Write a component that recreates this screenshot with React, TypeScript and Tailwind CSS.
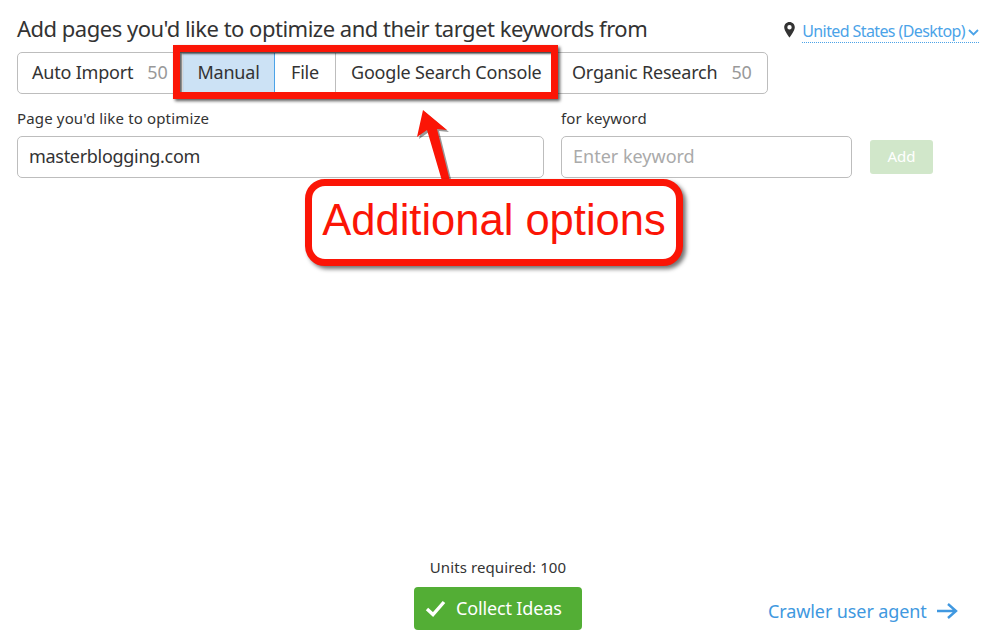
import React from 'react';

const tabClass = 'flex h-full items-center pb-[2px] text-[18px] tracking-[-0.2px] text-[#333]';

export default function App() {
  return (
    <main className="relative flex h-[635px] w-[1000px] flex-col overflow-hidden bg-white pl-[17px] font-['Noto_Sans',sans-serif] text-[#333]">
      {/* Title row */}
      <header className="flex h-[52px] items-start">
        <h1 className="mt-[12px] text-[22px] leading-[32px] tracking-[-0.5px] text-[#333] whitespace-nowrap">
          Add pages you'd like to optimize and their target keywords from
        </h1>
        <div className="ml-[137px] mt-[20px] flex items-center">
          <svg width="11" height="16" viewBox="0 0 11 16" className="mr-[7px] -mt-[3px]">
            <path fillRule="evenodd" fill="#333" d="M5.5 0C2.5 0 .2 2.3.2 5.3c0 3.6 5.3 10.4 5.3 10.4s5.3-6.800 5.3-10.400C10.800 2.300 8.500 0 5.500 0zm0 7.400a2.200 2.200 0 1 1 0-4.400 2.200 2.200 0 0 1 0 4.400z" />
          </svg>
          <a className="flex h-[23px] items-center border-b border-dotted border-[#4ba3e8] text-[16px] leading-[22px] tracking-[-0.6px] text-[#4ba3e8] whitespace-nowrap">
            United States (Desktop)
            <svg width="11" height="7" viewBox="0 0 11 7" className="ml-[3px] mt-[2px]">
              <path d="M1 1l4.500 4.500L10 1" fill="none" stroke="#4ba3e8" strokeWidth="1.800" />
            </svg>
          </a>
        </div>
      </header>

      {/* Source tabs */}
      <div className="flex h-[42px] w-[751px] items-center rounded-[5px] border border-[#bdbdbd]">
        <div className={`${tabClass} w-[165px] pl-[14px]`}>
          Auto Import <span className="ml-[14px] text-[#999]">50</span>
        </div>
        <div className={`${tabClass} w-[92px] justify-center border-r border-[#4ba3e8] bg-[#cce2f5]`}>Manual</div>
        <div className={`${tabClass} w-[61px] justify-center border-r border-[#bdbdbd]`}>File</div>
        <div className={`${tabClass} w-[221px] pl-[15px]`}>Google Search Console</div>
        <div className={`${tabClass} pl-[15px]`}>
          Organic Research <span className="ml-[14px] text-[#999]">50</span>
        </div>
      </div>

      {/* Manual entry form */}
      <div className="mt-[13px] flex items-end">
        <label className="flex w-[527px] flex-col">
          <span className="text-[15px] leading-[22px] tracking-[0.15px] text-[#333]">Page you'd like to optimize</span>
          <span className="mt-[7px] flex h-[42px] items-center rounded-[5px] border border-[#bdbdbd] pb-[2px] pl-[11px] text-[18px] tracking-[-0.3px]">
            masterblogging.com
          </span>
        </label>
        <label className="ml-[17px] flex w-[291px] flex-col">
          <span className="text-[15px] leading-[22px] tracking-[0.15px] text-[#333]">for keyword</span>
          <span className="mt-[7px] flex h-[42px] items-center rounded-[5px] border border-[#bdbdbd] pb-[2px] pl-[11px] text-[18px] text-[#aaa]">
            Enter keyword
          </span>
        </label>
        <button className="mb-[4px] ml-[18px] h-[34px] w-[63px] rounded-[3px] bg-[#d1e7ca] pb-[1px] text-[15px] text-white">
          Add
        </button>
      </div>

      {/* Footer actions */}
      <footer className="mt-auto mb-[5px] grid grid-cols-[397px_168px_1fr] items-end">
        <div />
        <div className="flex flex-col items-center">
          <span className="mb-[9px] whitespace-nowrap text-[15px] leading-[22px] tracking-[0.1px] text-[#333]">Units required: 100</span>
          <button className="flex h-[43px] w-[168px] items-center rounded-[4px] bg-[#53ae35] pl-[11px] text-[18px] tracking-[-0.15px] text-white">
            <svg width="21" height="17" viewBox="0 0 21 17" className="mr-[10px]">
              <path d="M2 9l6 5.500L19 2" fill="none" stroke="#fff" strokeWidth="3.400" />
            </svg>
            Collect Ideas
          </button>
        </div>
        <a className="mb-[7px] ml-[186px] flex items-center whitespace-nowrap text-[18px] leading-[24px] tracking-[-0.1px] text-[#4098e0]">
          Crawler user agent
          <svg width="22" height="18" viewBox="0 0 22 18" className="ml-[9px]">
            <path d="M1 9h19M12 2l8 7-8 7" fill="none" stroke="#4098e0" strokeWidth="2.400" />
          </svg>
        </a>
      </footer>

      {/* Red annotation overlay */}
      <div className="absolute left-[173px] top-[45px] h-[54px] w-[385px] border-[7px] border-[#fb1506] shadow-[2px_2px_3px_rgba(0,0,0,0.65),inset_2px_2px_2px_rgba(0,0,0,0.6)]" />
      <svg width="70" height="90" viewBox="0 0 70 90" className="absolute left-[400px] top-[105px]">
        <path d="M23 5L47 25L37 24L50 76L42 76L27 25L17 32Z" fill="#000" opacity="0.4" transform="translate(2 2)" />
        <path d="M23 5L47 25L37 24L50 76L42 76L27 25L17 32Z" fill="#fb1506" />
      </svg>
      <div className="absolute left-[305px] top-[179px] flex h-[87px] w-[378px] items-center justify-center rounded-[20px] border-[7px] border-[#fb1506] bg-white pb-[4px] font-['Liberation_Sans',sans-serif] text-[43.500px] text-[#fb1506] shadow-[3px_3px_4px_rgba(0,0,0,0.55)]">
        Additional options
      </div>
    </main>
  );
}
